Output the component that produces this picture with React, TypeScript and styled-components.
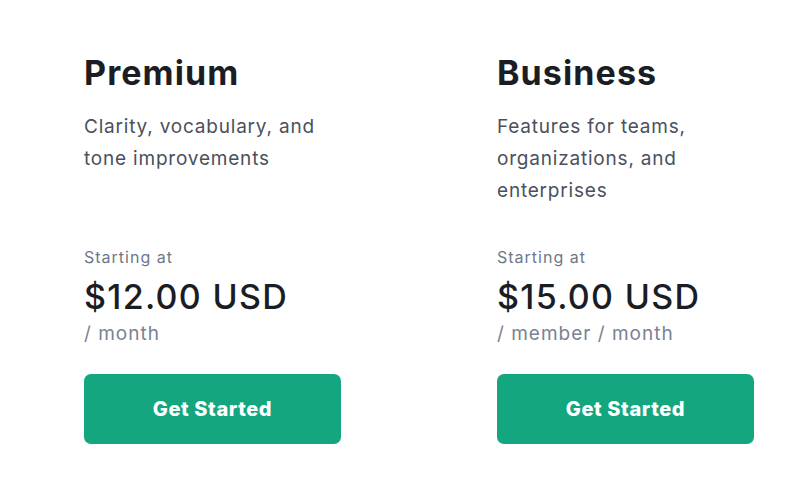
import styled, { createGlobalStyle } from 'styled-components'

const GlobalStyle = createGlobalStyle`
  html, body {
    margin: 0;
    padding: 0;
    background: #ffffff;
  }
  body {
    font-family: Inter, "Noto Sans", sans-serif;
    -webkit-font-smoothing: antialiased;
  }
`

interface Plan {
  name: string
  description: string
  price: string
  period: string
}

const PLANS: Plan[] = [
  {
    name: 'Premium',
    description: 'Clarity, vocabulary, and tone improvements',
    price: '$12.00 USD',
    period: '/ month'
  },
  {
    name: 'Business',
    description: 'Features for teams, organizations, and enterprises',
    price: '$15.00 USD',
    period: '/ member / month'
  }
]

const Page = styled.div`
  display: flex;
  gap: 156px;
  padding: 54px 0 0 84px;
  width: 800px;
  height: 482px;
  box-sizing: border-box;
`

const Card = styled.section`
  display: flex;
  flex-direction: column;
  width: 257px;
`

const Title = styled.h2`
  margin: 0;
  font-size: 34px;
  line-height: 38px;
  font-weight: 700;
  color: #1b1d24;
  letter-spacing: 1.1px;
`

const Description = styled.p`
  margin: 19px 0 0;
  min-height: 96px;
  font-size: 19px;
  line-height: 32px;
  font-weight: 400;
  letter-spacing: 0.8px;
  color: #4b505b;
`

const StartingAt = styled.div`
  margin-top: 39px;
  font-size: 16px;
  line-height: 22px;
  letter-spacing: 1px;
  color: #6e778a;
`

const Price = styled.div`
  margin-top: 10px;
  font-size: 34px;
  line-height: 38px;
  font-weight: 500;
  letter-spacing: 1.3px;
  color: #1b1d24;
`

const Period = styled.div`
  margin-top: 5px;
  font-size: 19px;
  line-height: 26px;
  letter-spacing: 1px;
  color: #7a8294;
`

const Button = styled.button`
  margin-top: 27px;
  height: 70px;
  width: 100%;
  border: none;
  border-radius: 7px;
  background: #13a67f;
  color: #ffffff;
  font-family: Inter, "Noto Sans", sans-serif;
  font-size: 20px;
  font-weight: 800;
  letter-spacing: 0.6px;
  cursor: pointer;
`

function PlanCard({ plan }: { plan: Plan }) {
  return (
    <Card>
      <Title>{plan.name}</Title>
      <Description>{plan.description}</Description>
      <StartingAt>Starting at</StartingAt>
      <Price>{plan.price}</Price>
      <Period>{plan.period}</Period>
      <Button>Get Started</Button>
    </Card>
  )
}

export default function App() {
  return (
    <>
      <GlobalStyle />
      <Page>
        {PLANS.map((p) => (
          <PlanCard key={p.name} plan={p} />
        ))}
      </Page>
    </>
  )
}
